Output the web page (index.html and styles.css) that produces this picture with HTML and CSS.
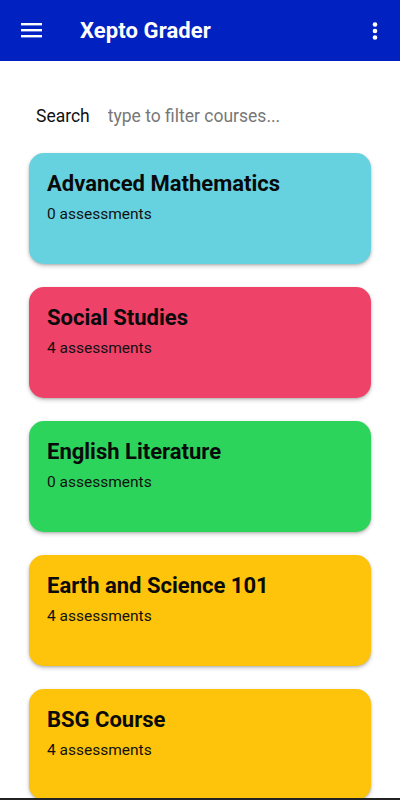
FILE: index.html
```html
<!DOCTYPE html>
<html lang="en">
<head>
<meta charset="utf-8">
<title>Xepto Grader</title>
<link rel="stylesheet" href="styles.css">
</head>
<body>
<header class="appbar">
  <button class="icon-btn menu" aria-label="Menu">
    <svg width="22" height="16" viewBox="0 0 22 16"><rect x="0" y="0" width="21" height="2.4" fill="#fff"/><rect x="0" y="6" width="21" height="2.4" fill="#fff"/><rect x="0" y="12" width="21" height="2.4" fill="#fff"/></svg>
  </button>
  <h1 class="title">Xepto Grader</h1>
  <button class="icon-btn more" aria-label="More">
    <svg width="6" height="18" viewBox="0 0 6 18"><circle cx="3" cy="2.5" r="2.3" fill="#fff"/><circle cx="3" cy="9" r="2.3" fill="#fff"/><circle cx="3" cy="15.5" r="2.3" fill="#fff"/></svg>
  </button>
</header>
<main class="content">
  <div class="search">
    <label class="search-label" for="q">Search</label>
    <input id="q" class="search-input" type="text" placeholder="type to filter courses...">
  </div>
  <ul class="courses">
    <li class="card cyan"><h2 class="card-title">Advanced Mathematics</h2><p class="card-sub">0 assessments</p></li>
    <li class="card red"><h2 class="card-title">Social Studies</h2><p class="card-sub">4 assessments</p></li>
    <li class="card green"><h2 class="card-title">English Literature</h2><p class="card-sub">0 assessments</p></li>
    <li class="card amber"><h2 class="card-title">Earth and Science 101</h2><p class="card-sub">4 assessments</p></li>
    <li class="card amber"><h2 class="card-title">BSG Course</h2><p class="card-sub">4 assessments</p></li>
  </ul>
</main>
<div class="screen-edge"></div>
</body>
</html>
```
FILE: styles.css
```css
* { box-sizing: border-box; }
html, body { margin: 0; padding: 0; }
body {
  font-family: Roboto, "Noto Sans", "Liberation Sans", sans-serif;
  background: #fff;
  color: #000;
  height: 800px;
  overflow: hidden;
}
.appbar {
  height: 61px;
  background: #0221c1;
  display: flex;
  align-items: center;
  padding: 0 20px 0 21px;
}
.icon-btn {
  background: none;
  border: 0;
  padding: 0;
  display: flex;
  align-items: center;
  justify-content: center;
  cursor: pointer;
}
.menu { width: 22px; height: 16px; margin-top: 1px; }
.title {
  margin: 0 0 0 37px;
  color: #fff;
  font-size: 22px;
  font-weight: 700;
  letter-spacing: 0.1px;
  flex: 1;
  line-height: 1;
}
.more { width: 6px; height: 18px; margin-right: 2px; margin-top: 1px; }
.content { padding: 0 29px; }
.search {
  display: flex;
  align-items: center;
  height: 40px;
  margin-top: 35px;
  padding-left: 7px;
}
.search-label {
  font-size: 17.5px;
  color: #111;
  margin-right: 18px;
}
.search-input {
  flex: 1;
  border: 0;
  outline: none;
  font: inherit;
  font-size: 17.5px;
  padding: 0;
  color: #333;
  background: transparent;
}
.search-input::placeholder { color: #777; }
.courses {
  list-style: none;
  margin: 17px 0 0;
  padding: 0;
  display: flex;
  flex-direction: column;
  gap: 23px;
}
.card {
  height: 111px;
  border-radius: 15px;
  padding: 18px 18px;
  box-shadow: 0 2px 4px rgba(0,0,0,0.22), 0 1px 2px rgba(0,0,0,0.12);
  flex-shrink: 0;
}
.card-title {
  margin: 0;
  font-size: 22px;
  line-height: 26px;
  font-weight: 700;
  color: #0a0a0a;
}
.card-sub {
  margin: 7px 0 0;
  font-size: 15.5px;
  line-height: 20px;
  color: #111;
}
.cyan { background: #67d2df; }
.red { background: #ef4269; }
.green { background: #2dd45c; }
.amber { background: #fec30b; }
.screen-edge {
  position: fixed;
  left: 0;
  right: 0;
  bottom: 0;
  height: 2px;
  background: #222;
}
```
